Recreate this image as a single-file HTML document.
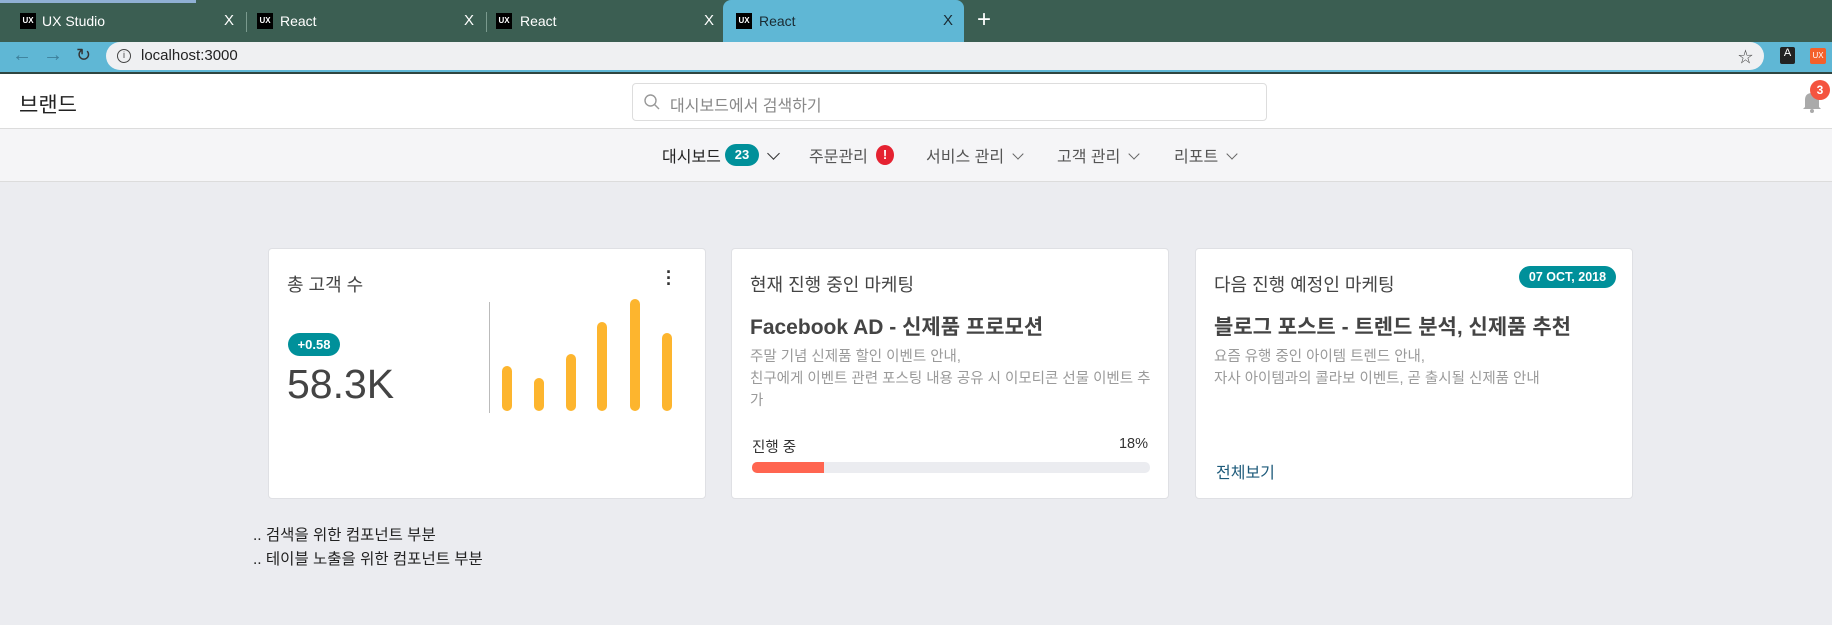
<!DOCTYPE html>
<html><head><meta charset="utf-8"><style>
*{margin:0;padding:0;box-sizing:border-box}
body{width:1832px;height:625px;overflow:hidden;background:#ebecf0;font-family:"Liberation Sans","Noto Sans CJK KR",sans-serif;position:relative;color:#333}
.a{position:absolute}
.tabs{left:0;top:0;width:1832px;height:42px;background:#3b5e52}
.tab{position:absolute;top:0;height:42px;color:#fff;font-size:14px;line-height:42px}
.ico{position:absolute;top:13px;width:16px;height:16px;background:#000;color:#fff;font-size:8px;font-weight:bold;line-height:16px;text-align:center}
.x{position:absolute;top:0;font-size:15px}
.tool{left:0;top:42px;width:1832px;height:31px;background:#5fb7d5}
.url{left:106px;top:42px;width:1658px;height:28px;background:#eff0f2;border-radius:14px}
.card{background:#fff;border:1px solid #dfe0e4;border-radius:4px;position:absolute;top:248px;height:251px;width:438px}
.ct{position:absolute;left:18px;top:22px;font-size:18px;color:#444}
.bt{position:absolute;left:18px;top:62px;font-size:21px;font-weight:bold;color:#444}
.ds{position:absolute;left:18px;top:97px;font-size:14.5px;color:#9a9a9a;line-height:22px}
.nav{position:absolute;top:143px;font-size:16px;color:#555}
.chev{display:inline-block;width:8px;height:8px;border-right:1.5px solid #666;border-bottom:1.5px solid #666;transform:rotate(45deg);margin-left:10px;position:relative;top:-4px}
.bar{position:absolute;width:10px;background:#fdb52e;border-radius:5px;bottom:87px}
</style></head><body>
<div class="a tabs"></div>
<div class="a" style="left:0;top:0;width:196px;height:3px;background:#8fb0d4"></div>
<div class="tab" style="left:0;width:246px"><div class="ico" style="left:20px">UX</div><span class="a" style="left:42px">UX Studio</span><span class="x" style="left:224px">X</span></div>
<div class="a" style="left:246px;top:12px;width:1px;height:20px;background:#7a9a8e"></div>
<div class="tab" style="left:246px;width:240px"><div class="ico" style="left:11px">UX</div><span class="a" style="left:34px">React</span><span class="x" style="left:218px">X</span></div>
<div class="a" style="left:486px;top:12px;width:1px;height:20px;background:#7a9a8e"></div>
<div class="tab" style="left:486px;width:237px"><div class="ico" style="left:10px">UX</div><span class="a" style="left:34px">React</span><span class="x" style="left:218px">X</span></div>
<div class="tab" style="left:723px;width:241px;background:#5fb7d5;border-radius:8px 8px 0 0;color:#1a2b33"><div class="ico" style="left:13px">UX</div><span class="a" style="left:36px">React</span><span class="x" style="left:220px">X</span></div>
<div class="a" style="left:977px;top:6px;color:#fff;font-size:24px">+</div>
<div class="a tool"></div>
<div class="a" style="left:12px;top:44px;font-size:20px;color:#3d7f9a">←</div>
<div class="a" style="left:43px;top:44px;font-size:20px;color:#3d7f9a">→</div>
<div class="a" style="left:76px;top:45px;font-size:18px;color:#333">↻</div>
<div class="a url"></div>
<div class="a" style="left:117px;top:49px;width:14px;height:14px;border:1.5px solid #444;border-radius:50%;font-size:9px;text-align:center;line-height:11px;color:#444">i</div>
<div class="a" style="left:141px;top:47px;font-size:15px;color:#222">localhost:3000</div>
<div class="a" style="left:1738px;top:46px;font-size:15px;color:#444">☆</div>
<div class="a" style="left:1780px;top:47px;width:15px;height:17px;background:#222;color:#fff;font-size:11px;text-align:center;border-radius:2px">A</div>
<div class="a" style="left:1810px;top:48px;width:16px;height:16px;background:#f4602a;color:#fff;font-size:8px;line-height:16px;text-align:center;border-radius:2px">UX</div>
<div class="a" style="left:0;top:72px;width:1832px;height:2px;background:#2f4540"></div>
<div class="a" style="left:0;top:74px;width:1832px;height:55px;background:#fff;border-bottom:1px solid #dcdcdc"></div>
<div class="a" style="left:19px;top:89px;font-size:21px;color:#222">브랜드</div>
<div class="a" style="left:632px;top:83px;width:635px;height:38px;border:1px solid #ddd;border-radius:4px;background:#fff"></div>
<svg class="a" style="left:643px;top:93px" width="18" height="18" viewBox="0 0 18 18"><circle cx="7.5" cy="7.5" r="5.5" fill="none" stroke="#999" stroke-width="1.4"/><path d="M11.5 11.5L16 16" stroke="#999" stroke-width="1.4"/></svg>
<div class="a" style="left:670px;top:92px;font-size:16px;color:#888">대시보드에서 검색하기</div>
<svg class="a" style="left:1801px;top:90px" width="22" height="24" viewBox="0 0 22 24"><path d="M4 17 L4 10 Q4 3 11 3 Q18 3 18 10 L18 17 L20 19 L2 19 Z" fill="#aaa"/><circle cx="11" cy="21" r="2" fill="#aaa"/></svg>
<div class="a" style="left:1810px;top:80px;width:20px;height:20px;border-radius:50%;background:#f4543f;color:#fff;font-size:12px;font-weight:bold;text-align:center;line-height:20px">3</div>
<div class="a" style="left:0;top:129px;width:1832px;height:53px;background:#f5f5f7;border-bottom:1px solid #dcdcdc"></div>
<div class="nav" style="left:662px;color:#222">대시보드</div>
<div class="a" style="left:725px;top:144px;width:34px;height:22px;border-radius:11px;background:#00909a;color:#fff;font-size:13px;font-weight:bold;text-align:center;line-height:22px">23</div>
<div class="a" style="left:769px;top:149px;width:9px;height:9px;border-right:1.6px solid #333;border-bottom:1.6px solid #333;transform:rotate(45deg)"></div>
<div class="nav" style="left:809px">주문관리</div>
<div class="a" style="left:876px;top:145px;width:18px;height:20px;border-radius:50%;background:#e52231;color:#fff;font-size:13px;font-weight:bold;text-align:center;line-height:20px">!</div>
<div class="nav" style="left:926px">서비스 관리<span class="chev"></span></div>
<div class="nav" style="left:1057px">고객 관리<span class="chev"></span></div>
<div class="nav" style="left:1174px">리포트<span class="chev"></span></div>

<div class="card" style="left:268px">
<div class="ct">총 고객 수</div>
<div class="a" style="left:397px;top:20px;font-size:18px;font-weight:bold;color:#333;line-height:6px">·<br>·<br>·</div>
<div class="a" style="left:19px;top:84px;width:52px;height:23px;border-radius:12px;background:#00909a;color:#fff;font-size:13px;font-weight:bold;text-align:center;line-height:23px">+0.58</div>
<div class="a" style="left:18px;top:112px;font-size:41px;color:#444">58.3K</div>
<div class="a" style="left:220px;top:53px;width:1px;height:111px;background:#bbb"></div>
<div class="bar" style="left:233px;height:45px"></div>
<div class="bar" style="left:265px;height:33px"></div>
<div class="bar" style="left:297px;height:57px"></div>
<div class="bar" style="left:328px;height:89px"></div>
<div class="bar" style="left:361px;height:112px"></div>
<div class="bar" style="left:393px;height:78px"></div>
</div>

<div class="card" style="left:731px">
<div class="ct">현재 진행 중인 마케팅</div>
<div class="bt">Facebook AD - 신제품 프로모션</div>
<div class="ds">주말 기념 신제품 할인 이벤트 안내,<br>친구에게 이벤트 관련 포스팅 내용 공유 시 이모티콘 선물 이벤트 추<br>가</div>
<div class="a" style="left:20px;top:187px;font-size:14.5px;color:#333">진행 중</div>
<div class="a" style="right:20px;top:187px;font-size:14.5px;color:#333">18%</div>
<div class="a" style="left:20px;top:213px;width:398px;height:11px;border-radius:5px;background:#ebecf0;overflow:hidden"><div style="width:72px;height:11px;background:#ff6550"></div></div>
</div>

<div class="card" style="left:1195px">
<div class="ct">다음 진행 예정인 마케팅</div>
<div class="a" style="left:323px;top:17px;width:97px;height:22px;border-radius:11px;background:#00909a;color:#fff;font-size:12.5px;font-weight:bold;text-align:center;line-height:22px">07 OCT, 2018</div>
<div class="bt">블로그 포스트 - 트렌드 분석, 신제품 추천</div>
<div class="ds">요즘 유행 중인 아이템 트렌드 안내,<br>자사 아이템과의 콜라보 이벤트, 곧 출시될 신제품 안내</div>
<div class="a" style="left:20px;top:210px;font-size:16px;color:#1d5a7a">전체보기</div>
</div>

<div class="a" style="left:253px;top:524px;font-size:15.5px;color:#222;line-height:24px">.. 검색을 위한 컴포넌트 부분<br>.. 테이블 노출을 위한 컴포넌트 부분</div>
</body></html>
